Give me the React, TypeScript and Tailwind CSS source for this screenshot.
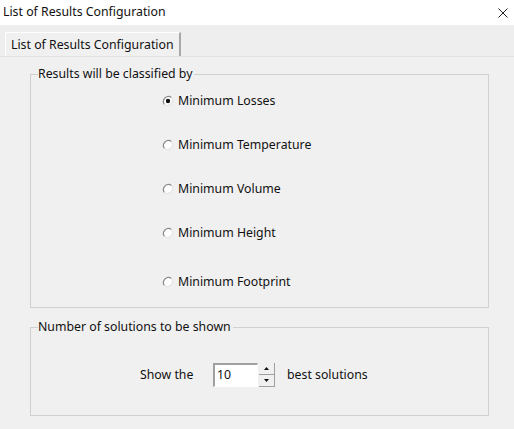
import React from 'react';

const font = { fontFamily: '"Segoe UI", "Noto Sans", "Open Sans", sans-serif' };

const Radio = ({ checked }: { checked?: boolean }) => (
  <svg width="12" height="12" viewBox="0 0 12 12" className="shrink-0">
    <circle cx="6" cy="6" r="5" fill="#ffffff" />
    <path d="M9.5 2.5 A5 5 0 0 0 2.5 9.5" fill="none" stroke="#8a8a8a" strokeWidth="1.2" />
    <path d="M2.5 9.5 A5 5 0 0 0 9.5 2.5" fill="none" stroke="#e4e4e4" strokeWidth="1.2" />
    {checked && <circle cx="6" cy="6" r="2.2" fill="#111111" />}
  </svg>
);

const options = [
  { label: 'Minimum Losses', checked: true },
  { label: 'Minimum Temperature' },
  { label: 'Minimum Volume' },
  { label: 'Minimum Height' },
  { label: 'Minimum Footprint' },
];

const GroupBox = ({ title, className, children }: { title: string; className: string; children: React.ReactNode }) => (
  <div className={`relative border border-[#d0d0d0] ${className}`}>
    <span className="absolute -top-[10px] left-[7px] bg-[#f0f0f0] pr-[2px] text-[12.3px] leading-[18px] text-[#111]">
      {title}
    </span>
    {children}
  </div>
);

export default function App() {
  return (
    <div className="w-[514px] h-[429px] bg-[#f0f0f0] flex flex-col overflow-hidden text-[#111]" style={font}>
      {/* title bar */}
      <div className="h-[25px] bg-white flex items-center justify-between pl-[3px] pr-[6px]">
        <span className="text-[12.3px] leading-none">List of Results Configuration</span>
        <svg width="10" height="10" viewBox="0 0 10 10">
          <path d="M0.5 0.5 L9.5 9.5 M9.5 0.5 L0.5 9.5" stroke="#222" strokeWidth="1" />
        </svg>
      </div>

      {/* tab strip */}
      <div className="h-[32px] bg-[#eeeeee] border-b border-[#e2e2e2] flex items-end pl-[5px]">
        <div className="h-[24px] flex items-center pl-[5px] pr-[5px] border-t border-l border-white border-r-2 border-r-[#a8a8a8] bg-[#f0f0f0]">
          <span className="text-[12.3px] leading-none pt-[1px]">List of Results Configuration</span>
        </div>
      </div>

      {/* panel */}
      <div className="flex-1 flex flex-col pl-[30px] pr-[25px] pt-[17px]">
        <GroupBox title="Results will be classified by" className="h-[234px]">
          <div className="flex flex-col pl-[131px] pt-[17px] gap-[26px]">
            {options.map((o, i) => (
              <div key={o.label} className={`flex items-center gap-[4px] h-[18px] ${i === 4 ? 'mt-[5px]' : ''}`}>
                <Radio checked={o.checked} />
                <span className="text-[12.3px] leading-[18px]">{o.label}</span>
              </div>
            ))}
          </div>
        </GroupBox>

        <GroupBox title="Number of solutions to be shown" className="h-[89px] mt-[19px]">
          <div className="flex items-center pt-[35px] pl-[109px]">
            <span className="text-[12.3px] leading-[18px] w-[73px]">Show the</span>
            <div className="w-[45px] h-[24px] bg-white border-t-2 border-l-2 border-t-[#a0a0a0] border-l-[#a0a0a0] border-b border-r border-b-white border-r-white flex items-center pl-[2px]">
              <span className="text-[12.3px] leading-none">10</span>
            </div>
            <div className="flex flex-col w-[16px] h-[24px] ml-[1px]">
              <div className="flex-1 flex items-center justify-center bg-[#f0f0f0] border-r border-b border-[#a0a0a0]">
                <svg width="5" height="3" viewBox="0 0 5 3"><path d="M2.5 0 L5 3 L0 3 Z" fill="#111" /></svg>
              </div>
              <div className="flex-1 flex items-center justify-center bg-[#f0f0f0] border-r border-b border-[#a0a0a0]">
                <svg width="5" height="3" viewBox="0 0 5 3"><path d="M0 0 L5 0 L2.5 3 Z" fill="#111" /></svg>
              </div>
            </div>
            <span className="text-[12.3px] leading-[18px] ml-[12px]">best solutions</span>
          </div>
        </GroupBox>
      </div>
    </div>
  );
}
